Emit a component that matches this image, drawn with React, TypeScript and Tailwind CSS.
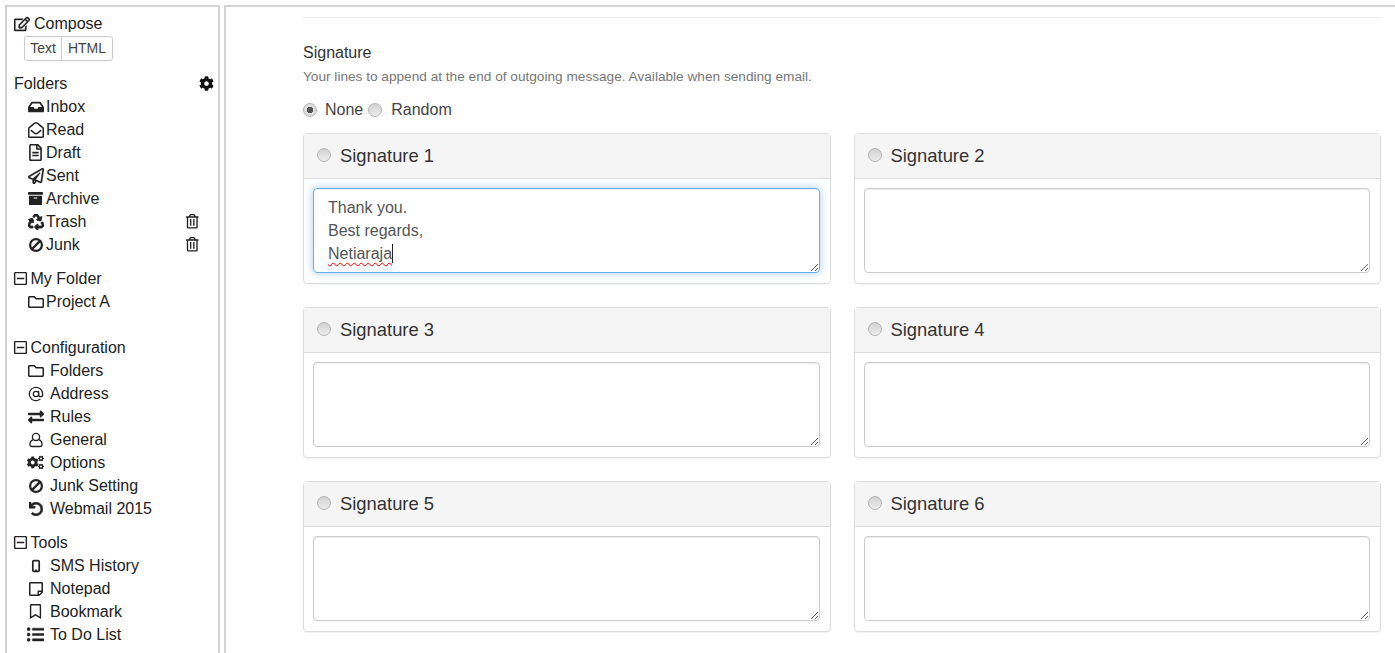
import React from "react";
import {
  FaRegEdit, FaCog, FaInbox, FaRegEnvelopeOpen, FaRegFileAlt, FaRegPaperPlane, FaArchive, FaRecycle,
  FaRegTrashAlt, FaRegMinusSquare, FaRegFolder, FaExchangeAlt, FaCogs, FaUndo,
  FaRegStickyNote, FaRegBookmark, FaListUl,
} from "react-icons/fa";
import { AtSign } from "lucide-react";

type I = React.ComponentType<{ className?: string }>;

const Ban: I = ({ className }) => (
  <svg viewBox="0 0 16 16" className={className} width="1em" height="1em" fill="none" stroke="currentColor" strokeWidth="2.2">
    <circle cx="8" cy="8" r="5.9" />
    <path d="M3.9 12.1 12.1 3.9" />
  </svg>
);

const User: I = ({ className }) => (
  <svg viewBox="0 0 16 16" className={className} width="1em" height="1em" fill="none" stroke="currentColor" strokeWidth="1.3">
    <circle cx="8" cy="4.9" r="3.6" />
    <path d="M5.4 7.6C3.2 8.4 1.9 10 1.9 12.2c0 1.5.8 2.3 2.2 2.3h7.8c1.4 0 2.2-.8 2.2-2.3 0-2.2-1.3-3.8-3.5-4.6" />
  </svg>
);

const Mobile: I = ({ className }) => (
  <svg viewBox="0 0 16 16" className={className} width="1em" height="1em" fill="none" stroke="currentColor">
    <rect x="4.8" y="2.6" width="6.4" height="10.8" rx="1.2" strokeWidth="1.7" />
    <path d="M7 12.2h2" strokeWidth="1.2" />
  </svg>
);

const At: I = ({ className }) => <AtSign className={className} size="1em" strokeWidth={1.8} />;

const Bold = (Icon: I, extra: string): I => ({ className }) => <Icon className={`${className} ${extra}`} />;

const Exchange = Bold(FaExchangeAlt as I, "stroke-[15]");
const UndoB = Bold(FaUndo as I, "stroke-[22]");
const ListB = Bold(FaListUl as I, "stroke-[15]");
const PlaneB = Bold(FaRegPaperPlane as I, "stroke-[8]");
const RecycleB = Bold(FaRecycle as I, "stroke-[28]");

function Row({ icon: Icon, label, wide, trash, size = "text-[16px]" }: { icon: I; label: string; wide?: boolean; trash?: boolean; size?: string }) {
  return (
    <div className="flex h-[23px] items-center pl-[20px]">
      <span className={`flex h-4 w-[17px] items-center justify-center ${wide ? "mr-[6px]" : "mr-[2px]"}`}>
        <Icon className={size} />
      </span>
      <span>{label}</span>
      {trash && <FaRegTrashAlt className="ml-auto mr-[19px] text-[14.5px]" />}
    </div>
  );
}

function Head({ label }: { label: string }) {
  return (
    <div className="flex h-[23px] items-center pl-[6px]">
      <FaRegMinusSquare className="mr-[2.5px] text-[15px]" />
      <span>{label}</span>
    </div>
  );
}

function Sidebar() {
  return (
    <aside className="h-[648px] w-[215px] shrink-0 border-2 border-b-0 border-[#d4d4d4] pt-[5px] text-[16px] text-[#222]">
      <div className="flex h-[23px] items-center pl-[7px]">
        <FaRegEdit className="mr-[4px] text-[16px] stroke-[14]" />
        <span>Compose</span>
      </div>
      <div className="ml-[17px] mt-[1px] flex h-[25px] w-fit rounded-[3px] border border-[#ccc] text-[14px] text-[#444]">
        <span className="flex w-[37px] items-center justify-center border-r border-[#ccc]">Text</span>
        <span className="flex w-[50px] items-center justify-center">HTML</span>
      </div>
      <div className="mt-[11px] flex h-[23px] items-center pl-[7px] pr-[4px]">
        <span>Folders</span>
        <FaCog className="ml-auto text-[15px] text-[#111]" />
      </div>
      <Row icon={FaInbox as I} label="Inbox" />
      <Row icon={FaRegEnvelopeOpen as I} label="Read" />
      <Row icon={FaRegFileAlt as I} label="Draft" size="text-[17px]" />
      <Row icon={PlaneB} label="Sent" />
      <Row icon={FaArchive as I} label="Archive" size="text-[15px]" />
      <Row icon={RecycleB} label="Trash" trash />
      <Row icon={Ban} label="Junk" trash />
      <div className="mt-[11px]">
        <Head label="My Folder" />
        <Row icon={FaRegFolder as I} label="Project A" />
      </div>
      <div className="mt-[23px]">
        <Head label="Configuration" />
        <Row icon={FaRegFolder as I} label="Folders" wide />
        <Row icon={At} label="Address" wide />
        <Row icon={Exchange} label="Rules" wide />
        <Row icon={User} label="General" wide />
        <Row icon={FaCogs as I} label="Options" wide size="text-[17px]" />
        <Row icon={Ban} label="Junk Setting" wide />
        <Row icon={UndoB} label="Webmail 2015" wide size="text-[14px]" />
      </div>
      <div className="mt-[11px]">
        <Head label="Tools" />
        <Row icon={Mobile} label="SMS History" wide />
        <Row icon={FaRegStickyNote as I} label="Notepad" wide />
        <Row icon={FaRegBookmark as I} label="Bookmark" wide size="text-[15px]" />
        <Row icon={ListB} label="To Do List" wide size="text-[17px]" />
      </div>
    </aside>
  );
}

function Radio({ checked }: { checked?: boolean }) {
  return (
    <input
      type="radio"
      readOnly
      checked={!!checked}
      className="m-0 h-[14px] w-[14px] shrink-0 appearance-none rounded-full border border-[#b4b4b4] bg-[linear-gradient(#d2d2d2,#ececec)] checked:bg-[radial-gradient(circle,#555_0,#555_3px,#dedede_3.5px)]"
    />
  );
}

function Panel({ n, children }: { n: number; children?: React.ReactNode }) {
  return (
    <div className="h-[151px] rounded-[4px] border border-[#ddd] shadow-[0_1px_1px_rgba(0,0,0,0.05)]">
      <div className="flex h-[45px] items-center border-b border-[#ddd] bg-[#f5f5f5] pl-[13px]">
        <span className="-mt-[3px] mr-[9px] flex"><Radio /></span>
        <span className="text-[18.4px] text-[#333]">Signature {n}</span>
      </div>
      <div className="pt-[9px] pl-[9px] pr-[10px]">
        {children ?? (
          <textarea
            aria-label={`Signature ${n}`}
            className="block h-[85px] w-full rounded-[4px] border border-[#ccc] px-[14px] py-[6px] shadow-[inset_0_1px_1px_rgba(0,0,0,0.075)]"
          />
        )}
      </div>
    </div>
  );
}

export default function App() {
  return (
    <div className="flex h-[653px] gap-[4px] overflow-hidden bg-white pl-[5px] pt-[5px] font-['Liberation_Sans',Arial,sans-serif]">
      <Sidebar />
      <main className="min-w-0 flex-1 border-l-2 border-t-2 border-[#d4d4d4] pl-[77px] pr-[14px]">
        <div className="mt-[10px] border-t border-[#eee]" />
        <h2 className="mt-[26px] text-[16px] leading-[18px] font-normal text-[#333]">Signature</h2>
        <p className="mt-[6px] text-[13.65px] leading-[18px] text-[#777]">
          Your lines to append at the end of outgoing message. Available when sending email.
        </p>
        <div className="mt-[12px] flex h-[24px] items-center text-[16px] text-[#444]">
          <Radio checked />
          <span className="ml-[8px]">None</span>
          <span className="ml-[5px] flex"><Radio /></span>
          <span className="ml-[9px]">Random</span>
        </div>
        <div className="mt-[11px] grid grid-cols-2 gap-x-[23px] gap-y-[23px]">
          <Panel n={1}>
            <div
              role="textbox"
              className="h-[85px] w-full resize overflow-auto rounded-[4px] border border-[#66afe9] px-[14px] py-[7px] text-[16px] leading-[23px] text-[#555] shadow-[inset_0_1px_1px_rgba(0,0,0,0.075),0_0_8px_rgba(102,175,233,0.6)]"
            >
              <div>Thank you.</div>
              <div>Best regards,</div>
              <div className="flex">
                <span className="underline decoration-[#f00] decoration-wavy decoration-1 underline-offset-[3px]">Netiaraja</span>
                <span className="my-[2px] w-px bg-[#222]" />
              </div>
            </div>
          </Panel>
          <Panel n={2} />
          <Panel n={3} />
          <Panel n={4} />
          <Panel n={5} />
          <Panel n={6} />
        </div>
      </main>
    </div>
  );
}
